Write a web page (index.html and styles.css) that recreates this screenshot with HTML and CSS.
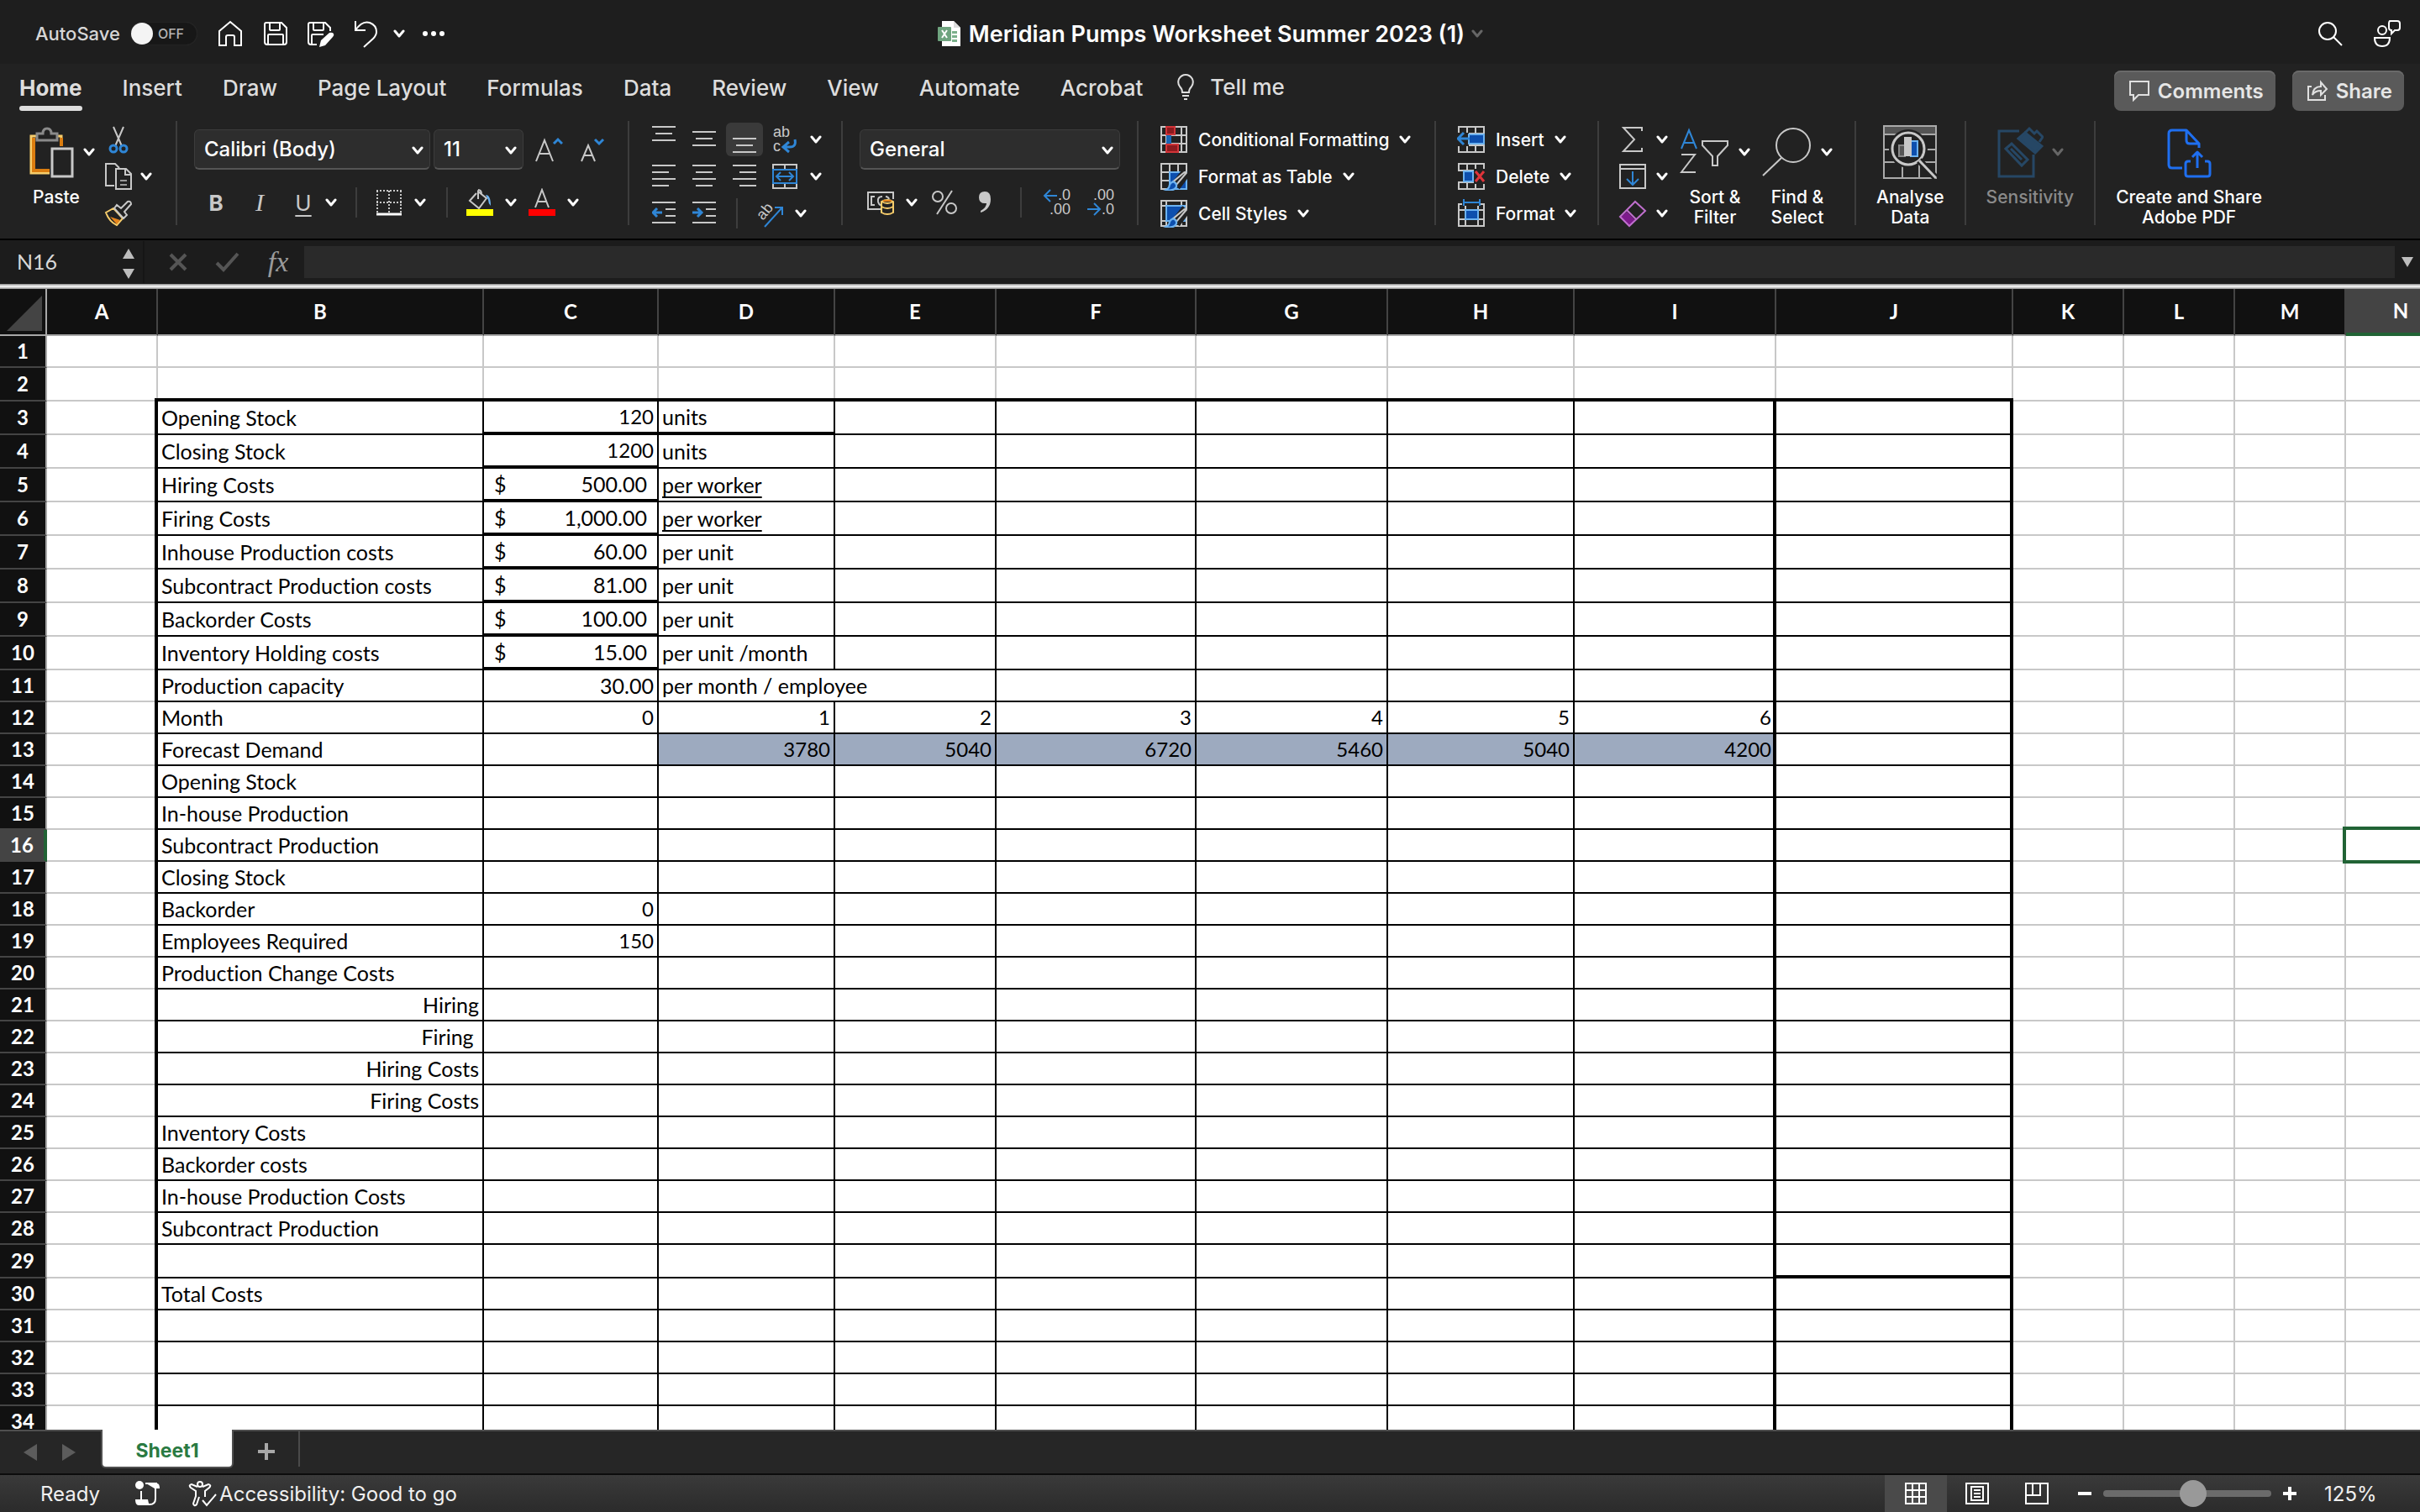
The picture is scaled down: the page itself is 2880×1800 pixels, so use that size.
FILE: index.html
```html
<!DOCTYPE html>
<html lang="en">

<head>
    <meta charset="utf-8">
    <meta name="viewport" content="width=device-width, initial-scale=1.0">
    <title>Meridian Pumps Worksheet Summer 2023 (1)</title>
    <link rel="stylesheet" href="styles.css">
</head>

<body>
    <svg class="symbols" aria-hidden="true">
        <symbol id="chev" viewBox="0 0 14 10">
            <path d="M2 2l5 6 5-6" fill="none" stroke="currentColor" stroke-width="3" stroke-linecap="round" stroke-linejoin="round" />
        </symbol>
        <symbol id="brush" viewBox="0 0 32 32">
            <path d="M30 11L18 27" stroke="#222" stroke-width="11" />
            <path d="M30 12L19 25l-4-3L27 12q3-2 3 0z" fill="#222" stroke="#c8c8c8" stroke-width="2" />
            <path d="M15 22q4 1 4 5-2 6-12 4 4-2 4-5 1-3 4-4z" fill="#0d4fae" stroke="#6cb2f0" stroke-width="2" />
        </symbol>
    </svg>

    <header class="titlebar">
        <div class="quick-access">
            <label class="autosave" for="autosave">AutoSave</label>
            <span class="toggle">
                <input type="checkbox" id="autosave">
                <span class="knob"></span>
                <span class="toggle-text">OFF</span>
            </span>
            <button class="quick-btn" aria-label="Home"><svg width="30" height="32" viewBox="0 0 30 32"><path d="M2 30V13L15 2l13 11v17h-8V20q0-2-2-2h-6q-2 0-2 2v10z" /></svg></button>
            <button class="quick-btn" aria-label="Save"><svg width="30" height="32" viewBox="0 0 30 32"><path d="M4 3h18l6 6v17q0 3-3 3H5q-3 0-3-3V5q0-2 2-2zM8 3v8q0 1 1 1h10q1 0 1-1V3M6 29V18q0-1 1-1h16q1 0 1 1v11" /></svg></button>
            <button class="quick-btn" aria-label="Save as"><svg width="34" height="34" viewBox="0 0 34 34"><path d="M12 30H5q-3 0-3-3V6q0-2 2-2h18l6 6v4M8 4v8q0 1 1 1h10q1 0 1-1V4M6 30V19q0-1 1-1h13" /><path d="M15 33l2-8 10-9q3-1 5 1 1 2-1 4l-9 10z" fill="#fff" stroke="none" /></svg></button>
            <button class="quick-btn" aria-label="Undo"><svg width="30" height="34" viewBox="0 0 30 34"><path d="M2 2v11h12M2 13Q10 1 19 4q8 3 8 11 0 4-4 8L12 33" /></svg></button>
            <button class="quick-btn slim" aria-label="Undo history"><svg class="chev"><use href="#chev" /></svg></button>
            <button class="quick-btn" aria-label="More"><svg width="28" height="8" viewBox="0 0 28 8"><g fill="#fff" stroke="none"><circle cx="4" cy="4" r="3" /><circle cx="14" cy="4" r="3" /><circle cx="24" cy="4" r="3" /></g></svg></button>
        </div>
        <div class="doc-title">
            <svg width="30" height="32" viewBox="0 0 30 32">
                <path d="M6 1h14l8 8v22H6z" fill="#fff" />
                <path d="M20 1v8h8" fill="#ddd" />
                <path d="M18 13h6v3h-6zM18 18h6v3h-6zM18 23h6v3h-6z" fill="#7bb08b" />
                <rect x="1" y="8" width="16" height="17" rx="1" fill="#6fa47f" />
                <path d="M6 12l6 9M12 12l-6 9" stroke="#fff" stroke-width="2" />
            </svg>
            <h1>Meridian Pumps Worksheet Summer 2023 (1)</h1>
            <svg class="chev dim"><use href="#chev" /></svg>
        </div>
        <div class="title-actions">
            <button class="quick-btn" aria-label="Search"><svg width="30" height="30" viewBox="0 0 30 30"><circle cx="12" cy="12" r="10" /><path d="M19 19l10 10" /></svg></button>
            <button class="quick-btn" aria-label="Presence"><svg width="34" height="34" viewBox="0 0 34 34"><circle cx="11" cy="13" r="5" /><path d="M2 22h18q0 10-9 10T2 22zM20 2h9q3 0 3 3v5q0 3-3 3h-3l-4 4v-4q-3 0-3-3V5q0-2 1-3z" /></svg></button>
        </div>
    </header>

    <nav class="tabs">
        <a href="#" class="tab active">Home</a>
        <a href="#" class="tab">Insert</a>
        <a href="#" class="tab">Draw</a>
        <a href="#" class="tab">Page Layout</a>
        <a href="#" class="tab">Formulas</a>
        <a href="#" class="tab">Data</a>
        <a href="#" class="tab">Review</a>
        <a href="#" class="tab">View</a>
        <a href="#" class="tab">Automate</a>
        <a href="#" class="tab">Acrobat</a>
        <a href="#" class="tab tell-me"><svg width="22" height="32" viewBox="0 0 22 32"><path d="M7 22q0-4-3-7-3-4-1-9 3-5 8-5t8 5q2 5-1 9-3 3-3 7zM7 26h8M9 30h4" fill="none" stroke="#ddd" stroke-width="2" /></svg>Tell me</a>
        <div class="tab-actions">
            <button class="pill"><svg width="26" height="26" viewBox="0 0 26 26"><path d="M2 2h22v16H12l-6 6v-6H2z" /></svg>Comments</button>
            <button class="pill"><svg width="26" height="26" viewBox="0 0 26 26"><path d="M6 8H2v16h20v-6M7 18q1-10 10-10V3l7 8-7 7v-5q-7 0-10 5z" /></svg>Share</button>
        </div>
    </nav>

    <section class="ribbon">
        <div class="group clipboard">
            <div class="big-col">
                <button class="big-btn">
                    <span class="big-icon">
                        <svg width="56" height="62" viewBox="0 0 56 62">
                            <path d="M4 12h36v44H4z" fill="#222" stroke="#f7cd6b" stroke-width="3" />
                            <path d="M7 14v39h33V14" fill="none" stroke="#db7d10" stroke-width="4" />
                            <path d="M11 17V9h7q0-6 5-6t5 6h7v8z" fill="#222" stroke="#8a8a8a" stroke-width="3" />
                            <path d="M26 24h30v38H26z" fill="#222" />
                            <path d="M29 27h24v33H29z" fill="#222" stroke="#c8c8c8" stroke-width="3" />
                        </svg>
                        <svg class="chev"><use href="#chev" /></svg>
                    </span>
                    <span>Paste</span>
                </button>
            </div>
            <div class="rows">
                <button class="icon-btn" aria-label="Cut"><svg width="32" height="34" viewBox="0 0 32 34"><path d="M10 2l10 23M22 2L12 25" stroke="#c8c8c8" stroke-width="2" fill="none" /><circle cx="10" cy="28" r="4" fill="none" stroke="#2f86d6" stroke-width="3" /><circle cx="22" cy="28" r="4" fill="none" stroke="#2f86d6" stroke-width="3" /></svg></button>
                <div class="row">
                    <button class="icon-btn" aria-label="Copy"><svg width="34" height="34" viewBox="0 0 34 34"><path d="M12 28H2V2h11l5 5M14 8h12l6 6v18H14zM25 8v7h7" fill="none" stroke="#c8c8c8" stroke-width="2" /><path d="M19 22h8M19 27h8" stroke="#9a9a9a" stroke-width="2" /></svg></button>
                    <svg class="chev"><use href="#chev" /></svg>
                </div>
                <button class="icon-btn" aria-label="Format painter"><svg width="34" height="32" viewBox="0 0 34 32"><path d="M2 15l9-5 11 12-7 8Q6 26 2 15z" fill="#222" stroke="#f7cd6b" stroke-width="2" /><path d="M7 20l12 4-4 5z" fill="#e8861c" /><path d="M12 10l3-4 5 4 8-8q4-1 4 3l-8 9 3 4-4 4z" fill="#222" stroke="#c8c8c8" stroke-width="2" /></svg></button>
            </div>
        </div>
        <div class="sep"></div>

        <div class="group font-group">
            <div class="row fields">
                <div class="field font-name">
                    <select aria-label="Font"><option>Calibri (Body)</option></select>
                    <svg class="chev"><use href="#chev" /></svg>
                </div>
                <div class="field font-size">
                    <select aria-label="Font size"><option>11</option></select>
                    <svg class="chev"><use href="#chev" /></svg>
                </div>
                <button class="icon-btn grow" aria-label="Increase font size"><svg width="34" height="32" viewBox="0 0 34 32"><path d="M2 30L12 5l10 25M6 21h12" fill="none" stroke="#c8c8c8" stroke-width="2" /><path d="M23 9l5-5 5 5" fill="none" stroke="#2f86d6" stroke-width="3" /></svg></button>
                <button class="icon-btn" aria-label="Decrease font size"><svg width="34" height="32" viewBox="0 0 34 32"><path d="M4 30l8-19 8 19M7 23h10" fill="none" stroke="#c8c8c8" stroke-width="2" /><path d="M20 4l5 5 5-5" fill="none" stroke="#2f86d6" stroke-width="3" /></svg></button>
            </div>
            <div class="row">
                <button class="text-btn bold">B</button>
                <button class="text-btn italic">I</button>
                <button class="text-btn underline">U</button>
                <svg class="chev"><use href="#chev" /></svg>
                <div class="mini-sep"></div>
                <button class="icon-btn" aria-label="Borders"><svg width="32" height="32" viewBox="0 0 32 32"><path d="M1 2h30M1 16h30M2 2v26M16 2v26M30 2v26" fill="none" stroke="#c8c8c8" stroke-width="2" stroke-dasharray="2 2" /><path d="M1 30h30" stroke="#fff" stroke-width="3" /></svg></button>
                <svg class="chev"><use href="#chev" /></svg>
                <div class="mini-sep"></div>
                <button class="icon-btn" aria-label="Fill colour"><svg width="34" height="34" viewBox="0 0 34 34"><path d="M13 6L5 15l11 9 9-12L15 4v9M15 2q4 0 4 5" fill="none" stroke="#c8c8c8" stroke-width="2" /><path d="M24 8q6 0 6 13-3-3-3-7z" fill="#6cb2f0" /><path d="M1 25h32v8H1z" fill="#ff0" /></svg></button>
                <svg class="chev"><use href="#chev" /></svg>
                <button class="icon-btn" aria-label="Font colour"><svg width="34" height="34" viewBox="0 0 34 34"><path d="M9 23l8-21 8 21M12 16h10" fill="none" stroke="#c8c8c8" stroke-width="2" /><path d="M1 25h32v8H1z" fill="#f00" /></svg></button>
                <svg class="chev"><use href="#chev" /></svg>
            </div>
        </div>
        <div class="sep"></div>

        <div class="group align-group">
            <div class="row">
                <button class="icon-btn" aria-label="Top align"><svg class="lines" viewBox="0 0 28 32"><path d="M0 1h28M4 9h20M0 17h28" /></svg></button>
                <button class="icon-btn" aria-label="Middle align"><svg class="lines" viewBox="0 0 28 32"><path d="M0 7h28M4 15h20M0 23h28" /></svg></button>
                <button class="icon-btn active" aria-label="Bottom align"><svg class="lines" viewBox="0 0 28 32"><path d="M0 15h28M4 23h20M0 31h28" /></svg></button>
                <button class="icon-btn" aria-label="Wrap text"><svg class="glyphs" width="30" height="34" viewBox="0 0 30 34"><text x="1" y="14">ab</text><text x="1" y="31">c</text><path d="M27 17q2 9-6 9h-7M20 20l-7 6 7 6" fill="none" stroke="#2f86d6" stroke-width="3" /></svg></button>
                <svg class="chev"><use href="#chev" /></svg>
            </div>
            <div class="row">
                <button class="icon-btn" aria-label="Align left"><svg class="lines" viewBox="0 0 28 32"><path d="M0 3h28M0 11h20M0 19h28M0 27h20" /></svg></button>
                <button class="icon-btn" aria-label="Centre"><svg class="lines" viewBox="0 0 28 32"><path d="M0 3h28M4 11h20M0 19h28M4 27h20" /></svg></button>
                <button class="icon-btn" aria-label="Align right"><svg class="lines" viewBox="0 0 28 32"><path d="M0 3h28M8 11h20M0 19h28M8 27h20" /></svg></button>
                <button class="icon-btn" aria-label="Merge"><svg width="32" height="32" viewBox="0 0 32 32"><path d="M2 2h28v28H2zM16 2v6M16 24v6" fill="none" stroke="#c8c8c8" stroke-width="2" /><path d="M2 8h28v16H2z" fill="#222" stroke="#2f86d6" stroke-width="2" /><path d="M6 16h20M11 11l-5 5 5 5M21 11l5 5-5 5" fill="none" stroke="#2f86d6" stroke-width="2" /></svg></button>
                <svg class="chev"><use href="#chev" /></svg>
            </div>
            <div class="row">
                <button class="icon-btn" aria-label="Decrease indent"><svg class="lines" viewBox="0 0 28 32"><path d="M0 3h28M16 11h12M16 19h12M0 27h28" /><path class="blue" d="M1 15h11M6 10l-5 5 5 5" /></svg></button>
                <button class="icon-btn" aria-label="Increase indent"><svg class="lines" viewBox="0 0 28 32"><path d="M0 3h28M16 11h12M16 19h12M0 27h28" /><path class="blue" d="M0 15h11M6 10l5 5-5 5" /></svg></button>
                <div class="mini-sep tight"></div>
                <button class="icon-btn" aria-label="Orientation"><svg class="glyphs" width="34" height="34" viewBox="0 0 34 34"><text x="0" y="0" transform="translate(9 26) rotate(-50)">ab</text><path d="M11 33L31 11M23 10h9v9" fill="none" stroke="#2f86d6" stroke-width="2" /></svg></button>
                <svg class="chev"><use href="#chev" /></svg>
            </div>
        </div>
        <div class="sep"></div>

        <div class="group font-group">
            <div class="row fields">
                <div class="field number-format">
                    <select aria-label="Number format"><option>General</option></select>
                    <svg class="chev"><use href="#chev" /></svg>
                </div>
            </div>
            <div class="row number-row">
                <button class="icon-btn" aria-label="Currency"><svg width="34" height="32" viewBox="0 0 34 32"><path d="M17 24H2V4h30v8" fill="none" stroke="#c8c8c8" stroke-width="2" /><path d="M10 9H6v10h4M19 9q-6 0-5 6 1 4 3 4M23 9q3 0 4 3" fill="none" stroke="#c8c8c8" stroke-width="2" /><path d="M18 15q7-4 14 0v13q-7 4-14 0z" fill="#222" stroke="#f7cd6b" stroke-width="2" /><path d="M18 15q7 4 14 0M18 21q7 4 14 0" fill="none" stroke="#f7cd6b" stroke-width="2" /><path d="M20 14h10" stroke="#e8861c" stroke-width="2" /></svg></button>
                <svg class="chev"><use href="#chev" /></svg>
                <button class="icon-btn" aria-label="Percent"><svg width="32" height="32" viewBox="0 0 32 32"><g fill="none" stroke="#c8c8c8" stroke-width="2"><circle cx="8" cy="9" r="6" /><circle cx="24" cy="23" r="6" /><path d="M25 2L7 30" /></g></svg></button>
                <button class="icon-btn" aria-label="Comma"><svg width="18" height="30" viewBox="0 0 18 30"><path d="M9 2q7 0 7 9 0 12-12 16v-2q7-4 7-9-9 1-9-7 0-7 7-7z" fill="#c8c8c8" /></svg></button>
                <div class="mini-sep"></div>
                <button class="icon-btn" aria-label="Increase decimal"><svg class="glyphs" width="34" height="34" viewBox="0 0 34 34"><text x="33" y="14" text-anchor="end">.0</text><text x="33" y="31" text-anchor="end">.00</text><path d="M2 9h15M9 2L2 9l7 7" fill="none" stroke="#2f86d6" stroke-width="2" /></svg></button>
                <button class="icon-btn" aria-label="Decrease decimal"><svg class="glyphs" width="34" height="34" viewBox="0 0 34 34"><text x="33" y="14" text-anchor="end">.00</text><text x="33" y="31" text-anchor="end">.0</text><path d="M1 25h15M9 18l7 7-7 7" fill="none" stroke="#2f86d6" stroke-width="2" /></svg></button>
            </div>
        </div>
        <div class="sep"></div>

        <div class="group rows styles-group">
            <button class="line-btn"><svg width="34" height="34" viewBox="0 0 34 34"><path d="M2 2h30v30H2zM2 12h30M2 22h30M8 2v30M26 2v30" fill="none" stroke="#c8c8c8" stroke-width="2" /><path d="M8 2h10v9H8zM8 23h14v9H8z" fill="#8c1a1f" stroke="#d13438" stroke-width="2" /><path d="M8 12h6v10H8z" fill="#1a66b5" /></svg>Conditional Formatting<svg class="chev"><use href="#chev" /></svg></button>
            <button class="line-btn"><svg width="34" height="34" viewBox="0 0 34 34"><path d="M2 2h30v30H2zM2 12h30M2 22h30M12 2v30M22 2v30" fill="none" stroke="#c8c8c8" stroke-width="2" /><path d="M12 12h20v20H12z" fill="#0d4fae" stroke="#6cb2f0" stroke-width="2" /><use href="#brush" width="34" height="34" /></svg>Format as Table<svg class="chev"><use href="#chev" /></svg></button>
            <button class="line-btn"><svg width="34" height="34" viewBox="0 0 34 34"><path d="M2 2h30v30H2zM2 8h30M2 26h30M8 2v30M26 2v30" fill="none" stroke="#c8c8c8" stroke-width="2" /><path d="M8 8h22v18H8z" fill="#0d4fae" stroke="#6cb2f0" stroke-width="2" /><use href="#brush" width="34" height="34" /></svg>Cell Styles<svg class="chev"><use href="#chev" /></svg></button>
        </div>
        <div class="sep"></div>

        <div class="group rows cells-group">
            <button class="line-btn"><svg width="34" height="34" viewBox="0 0 34 34"><path d="M2 2h30v30H2zM2 10h30M2 24h30M12 2v30M22 2v30" fill="none" stroke="#c8c8c8" stroke-width="2" /><path d="M0 9h14v16H0z" fill="#222" /><path d="M14 11h18v11H14z" fill="#0d4fae" stroke="#6cb2f0" stroke-width="2" /><path d="M1 16h14M8 9l-7 7 7 7" fill="none" stroke="#2f86d6" stroke-width="3" /></svg>Insert<svg class="chev"><use href="#chev" /></svg></button>
            <button class="line-btn"><svg width="34" height="34" viewBox="0 0 34 34"><path d="M2 10V2h30v8zM2 24v8h30v-8zM12 2v30M22 2v30" fill="none" stroke="#c8c8c8" stroke-width="2" /><path d="M8 11h11v12H8z" fill="#0d4fae" stroke="#6cb2f0" stroke-width="2" /><path d="M20 8h14v18H20z" fill="#222" /><path d="M22 11l10 12M32 11L22 23" stroke="#e0343a" stroke-width="3" /></svg>Delete<svg class="chev"><use href="#chev" /></svg></button>
            <button class="line-btn"><svg width="34" height="34" viewBox="0 0 34 34"><path d="M6 6H2v26h30V6h-4M2 13h30M2 24h30M10 8v24M25 8v24" fill="none" stroke="#c8c8c8" stroke-width="2" /><path d="M10 13h15v11H10z" fill="#0d4fae" stroke="#6cb2f0" stroke-width="2" /><path d="M8 0v8M27 0v8M8 4h19" fill="none" stroke="#2f86d6" stroke-width="2" /></svg>Format<svg class="chev"><use href="#chev" /></svg></button>
        </div>
        <div class="sep"></div>

        <div class="group editing-group">
            <div class="rows">
                <button class="line-btn" aria-label="AutoSum"><svg width="34" height="34" viewBox="0 0 34 34"><path d="M28 7V3H6l13 14L6 31h22v-4" fill="none" stroke="#c8c8c8" stroke-width="2" /></svg><svg class="chev"><use href="#chev" /></svg></button>
                <button class="line-btn" aria-label="Fill"><svg width="34" height="34" viewBox="0 0 34 34"><path d="M2 3h30v28H2zM2 8h30" fill="none" stroke="#c8c8c8" stroke-width="2" /><path d="M17 11v16M10 20l7 7 7-7" fill="none" stroke="#2f86d6" stroke-width="2" /></svg><svg class="chev"><use href="#chev" /></svg></button>
                <button class="line-btn" aria-label="Clear"><svg width="34" height="34" viewBox="0 0 34 34"><path d="M10 15l10 10-7 7L2 22z" fill="#7d1a8c" /><path d="M20 3l12 11-19 18L2 21zM10 13l11 11" fill="none" stroke="#c06fce" stroke-width="2" /></svg><svg class="chev"><use href="#chev" /></svg></button>
            </div>
            <button class="big-btn">
                <span class="big-icon">
                    <svg width="60" height="62" viewBox="0 0 60 62"><path d="M2 27l9-22 9 22M5 20h12" fill="none" stroke="#2f86d6" stroke-width="2" /><path d="M2 34h16L2 55h17" fill="none" stroke="#c8c8c8" stroke-width="2" /><path d="M27 18h30v5L45 36v11h-6V36L27 23z" fill="none" stroke="#c8c8c8" stroke-width="2" /></svg>
                    <svg class="chev"><use href="#chev" /></svg>
                </span>
                <span>Sort &amp;<br>Filter</span>
            </button>
            <button class="big-btn">
                <span class="big-icon">
                    <svg width="60" height="62" viewBox="0 0 60 62"><g fill="none" stroke="#c8c8c8" stroke-width="2"><circle cx="37" cy="23" r="20" /><path d="M23 38L1 59" /></g></svg>
                    <svg class="chev"><use href="#chev" /></svg>
                </span>
                <span>Find &amp;<br>Select</span>
            </button>
        </div>
        <div class="sep"></div>

        <div class="group single">
            <button class="big-btn">
                <span class="big-icon">
                    <svg width="66" height="66" viewBox="0 0 66 66"><path d="M2 3h62v9H2z" fill="#555" /><path d="M2 2h62v62H2zM2 12h62M2 30h62M2 45h62M24 45v18M44 45v18" fill="none" stroke="#aaa" stroke-width="2" /><circle cx="31" cy="29" r="23" fill="#222" /><circle cx="31" cy="29" r="19" fill="#222" stroke="#c8c8c8" stroke-width="3" /><path d="M44 43l20 21" stroke="#222" stroke-width="8" /><path d="M44 43l20 21" stroke="#c8c8c8" stroke-width="3" /><path d="M20 25h7v13h-7z" fill="#555" stroke="#888" stroke-width="2" /><path d="M34 20h8v18h-8z" fill="#0d4fae" stroke="#6cb2f0" stroke-width="2" /><path d="M26 15h9v23h-9z" fill="#c8c8c8" /></svg>
                </span>
                <span>Analyse<br>Data</span>
            </button>
        </div>
        <div class="sep"></div>

        <div class="group single">
            <button class="big-btn" disabled>
                <span class="big-icon">
                    <svg width="56" height="62" viewBox="0 0 56 62"><g fill="none" stroke="#264765" stroke-width="3"><path d="M27 6H3v54h41V34" /><path d="M11 27l7-6 19 19-7 7zM17 27l13 13" /><path d="M26 15l8-7 20 16-8 8z" fill="#264765" /><path d="M34 8l5-5 6 6 3-3 7 7-4 6" /></g></svg>
                    <svg class="chev"><use href="#chev" /></svg>
                </span>
                <span>Sensitivity</span>
            </button>
        </div>
        <div class="sep"></div>

        <div class="group single adobe">
            <button class="big-btn">
                <span class="big-icon">
                    <svg width="54" height="62" viewBox="0 0 54 62"><path d="M19 50H7q-4 0-4-4V9q0-4 4-4h17l15 16v5M24 5v12q0 4 4 4h11M29 42h-3q-3 0-3 3v12q0 3 3 3h23q3 0 3-3V45q0-3-3-3h-3M37 50V31M31 37l6-6 6 6" fill="none" stroke="#1f6ff0" stroke-width="3" stroke-linejoin="round" /></svg>
                </span>
                <span>Create and Share<br>Adobe PDF</span>
            </button>
        </div>
    </section>

    <section class="formula-bar">
        <input class="name-box" type="text" value="N16" aria-label="Name box">
        <div class="stepper">
            <svg width="14" height="38" viewBox="0 0 14 38"><path d="M7 1l7 12H0zM7 37L0 25h14z" fill="#bdbdbd" /></svg>
        </div>
        <button class="formula-btn" aria-label="Cancel"><svg width="24" height="24" viewBox="0 0 24 24"><path d="M3 3l18 18M21 3L3 21" stroke="#555" stroke-width="4" /></svg></button>
        <button class="formula-btn" aria-label="Enter"><svg width="30" height="24" viewBox="0 0 30 24"><path d="M2 13l8 8L27 2" fill="none" stroke="#555" stroke-width="4" /></svg></button>
        <button class="formula-btn fx">fx</button>
        <input class="formula-input" type="text" aria-label="Formula">
        <button class="expand" aria-label="Expand formula bar"><svg width="14" height="12" viewBox="0 0 14 12"><path d="M0 0h14L7 12z" fill="#bdbdbd" /></svg></button>
    </section>

    <main class="sheet">
        <table class="grid">
            <colgroup id="cols"></colgroup>
            <thead>
                <tr id="headRow"></tr>
            </thead>
            <tbody id="rows"></tbody>
        </table>
    </main>

    <footer>
        <div class="sheet-tabs">
            <button class="arrow" aria-label="Previous sheet"><svg width="16" height="20" viewBox="0 0 16 20"><path d="M16 0v20L0 10z" fill="#5c5c5c" /></svg></button>
            <button class="arrow" aria-label="Next sheet"><svg width="16" height="20" viewBox="0 0 16 20"><path d="M0 0v20l16-10z" fill="#5c5c5c" /></svg></button>
            <a href="#" class="sheet-tab">Sheet1</a>
            <button class="add-sheet" aria-label="Add sheet"><svg width="20" height="20" viewBox="0 0 20 20"><path d="M10 0v20M0 10h20" stroke="#a8a8a8" stroke-width="4" /></svg></button>
        </div>
        <div class="status">
            <span class="ready">Ready</span>
            <svg class="macro" width="30" height="30" viewBox="0 0 30 30"><circle cx="5" cy="5" r="5" fill="#fff" /><path d="M13 3h13q3 0 3 6h-6" fill="#fff" /><path d="M12 3h14M7 12v11M24 4v17q0 7-7 7" fill="none" stroke="#fff" stroke-width="2" /><path d="M0 22h15q0 4 3 7H4q-4 0-4-7z" fill="#fff" /></svg>
            <svg class="access" width="34" height="32" viewBox="0 0 34 32"><g fill="none" stroke="#fff" stroke-width="2"><circle cx="14" cy="5" r="3" /><path d="M11 8L4 5Q0 6 3 9l6 4v6L6 28q1 4 4 1l3-9M17 8l7-3q4 1 1 4l-5 4v7M17 24l5 6L33 17" /></g></svg>
            <span>Accessibility: Good to go</span>
            <div class="view-controls">
                <button class="view active" aria-label="Normal view"><svg width="28" height="28" viewBox="0 0 28 28"><path d="M2 2h24v24H2zM2 10h24M2 18h24M10 2v24M18 2v24" /></svg></button>
                <button class="view" aria-label="Page layout view"><svg width="28" height="28" viewBox="0 0 28 28"><path d="M1 2h26v24H1zM7 6h14v16H7zM10 10h8M10 14h8M10 18h8" /></svg></button>
                <button class="view" aria-label="Page break view"><svg width="28" height="28" viewBox="0 0 28 28"><path d="M1 2h26v24H1zM1 16h17V2M9 2v14" /></svg></button>
                <button class="zoom-btn" aria-label="Zoom out"><svg width="16" height="16" viewBox="0 0 16 16"><path d="M0 8h16" stroke="#fff" stroke-width="4" /></svg></button>
                <input class="zoom" type="range" min="0" max="100" value="54" aria-label="Zoom">
                <button class="zoom-btn" aria-label="Zoom in"><svg width="16" height="16" viewBox="0 0 16 16"><path d="M8 0v16M0 8h16" stroke="#fff" stroke-width="4" /></svg></button>
                <span class="zoom-value">125%</span>
            </div>
        </div>
    </footer>

    <script src="sheet.js"></script>
</body>

</html>
```
FILE: styles.css
```css
:root {
    --bar: #1e1e1e;
    --ribbon: #222;
    --icon: #c8c8c8;
    --blue: #2f86d6;
    --line: #c8c8c8;
    --green: #216335;
    --ui: Inter, "Liberation Sans", sans-serif;
    --cell: Lato, "Liberation Sans", sans-serif;
}

* {
    box-sizing: border-box;
}

body {
    display: flex;
    flex-direction: column;
    height: 100vh;
    margin: 0;
    overflow: hidden;
    background: var(--ribbon);
    color: #fff;
    font-family: var(--ui);
    font-size: 22px;
    font-weight: 500;
}

button {
    display: flex;
    align-items: center;
    justify-content: center;
    padding: 0;
    border: none;
    background: none;
    color: inherit;
    font: inherit;
}

svg {
    flex: none;
    display: block;
}

a {
    color: inherit;
    text-decoration: none;
}

.symbols {
    position: absolute;
    width: 0;
    height: 0;
}

.chev {
    width: 14px;
    height: 10px;
}

.row {
    display: flex;
    align-items: center;
}

/* title bar */
.titlebar {
    display: grid;
    grid-template-columns: 1fr auto 1fr;
    align-items: center;
    height: 76px;
    padding: 4px 42px 0;
    background: var(--bar);
}

.quick-access {
    display: flex;
    align-items: center;
}

.autosave {
    margin-right: 12px;
    color: #d6d6d6;
}

.toggle {
    position: relative;
    display: flex;
    align-items: center;
    width: 80px;
    height: 28px;
    margin-right: 12px;
    border-radius: 14px;
    background: #171717;
    box-shadow: inset 0 0 2px #444;
}

.toggle input {
    position: absolute;
    inset: 0;
    margin: 0;
    opacity: 0;
}

.knob {
    width: 26px;
    height: 26px;
    margin: 0 6px 0 1px;
    border-radius: 50%;
    background: #f4f4f4;
}

.toggle-text {
    color: #b4b4b4;
    font-size: 16px;
}

.quick-btn {
    width: 54px;
    height: 44px;
}

.quick-btn.slim {
    width: 24px;
    margin-right: 2px;
}

.quick-btn svg:not(.chev) {
    fill: none;
    stroke: #fff;
    stroke-width: 2;
}

.doc-title {
    display: flex;
    align-items: center;
    gap: 8px;
}

.doc-title h1 {
    margin: 0;
    font-size: 27px;
    font-weight: 600;
}

.chev.dim {
    color: #666;
}

.title-actions {
    display: flex;
    justify-content: flex-end;
    gap: 14px;
    margin-right: -30px;
}

/* ribbon tabs */
.tabs {
    display: flex;
    align-items: flex-start;
    gap: 48px;
    height: 62px;
    padding: 0 19px 0 23px;
    color: #ddd;
    font-size: 26px;
}

.tab {
    position: relative;
    height: 56px;
    line-height: 58px;
}

.tab.active {
    font-weight: 700;
}

.tab.active::after {
    content: "";
    position: absolute;
    left: 0;
    right: 0;
    bottom: 0;
    height: 6px;
    border-radius: 3px;
    background: #ddd;
}

.tell-me {
    display: flex;
    align-items: center;
    gap: 18px;
    margin-left: -8px;
}

.tab-actions {
    display: flex;
    gap: 20px;
    margin: 8px 0 0 auto;
}

.pill {
    gap: 9px;
    height: 48px;
    padding: 0 14px 0 17px;
    border-radius: 8px;
    background: #5a5a5a;
    box-shadow: inset 0 2px #6a6a6a;
    color: #e6e6e6;
    font-size: 24px;
    font-weight: 600;
}

.pill svg {
    fill: none;
    stroke: #e0e0e0;
    stroke-width: 2;
}

/* ribbon */
.ribbon {
    display: flex;
    align-items: flex-start;
    padding: 6px 0 8px;
    border-bottom: 2px solid #000;
}

.sep {
    width: 2px;
    height: 124px;
    background: #3d3d3d;
}

.mini-sep {
    width: 2px;
    height: 36px;
    margin: 0 16px;
    background: #3d3d3d;
}

.group {
    display: flex;
    height: 132px;
}

.rows {
    display: flex;
    flex-direction: column;
}

.icon-btn {
    width: 44px;
    height: 44px;
}

.icon-btn.active {
    height: 40px;
    border-radius: 6px;
    background: #3a3a3a;
}

.icon-btn + .chev {
    margin: 0 8px;
}

.text-btn + .chev {
    margin-right: 6px;
}

.big-btn {
    flex-direction: column;
    justify-content: flex-start;
    line-height: 24px;
    font-size: 21px;
}

.big-btn:disabled {
    color: #8a8a8a;
}

.big-icon {
    display: flex;
    align-items: center;
    gap: 10px;
    height: 74px;
    margin-bottom: 5px;
}

.big-btn:disabled .chev {
    color: #666;
}

.clipboard {
    width: 209px;
    padding-left: 33px;
}

.clipboard .big-btn {
    align-items: flex-start;
}

.clipboard .big-btn > span:last-child {
    margin-left: 6px;
}

.clipboard .rows {
    margin-left: 6px;
}

.clipboard .icon-btn + .chev {
    margin: 0 4px;
}

.font-group {
    flex-direction: column;
    gap: 17px;
    padding: 10px 20px 0;
}

.font-group .row:last-child {
    height: 44px;
}

.fields {
    gap: 4px;
}

.field {
    position: relative;
}

.field .chev {
    position: absolute;
    right: 8px;
    top: 20px;
    pointer-events: none;
}

.field select {
    appearance: none;
    width: 100%;
    height: 48px;
    padding: 0 11px;
    border: 1px solid #3c3c3c;
    border-bottom: 2px solid #555;
    border-radius: 6px;
    background: #2d2d2d;
    color: #fff;
    font: inherit;
    font-size: 24px;
}

.font-name {
    width: 281px;
}

.font-size {
    width: 107px;
}

.number-format {
    width: 310px;
}

.icon-btn.grow {
    margin: 0 4px;
}

.text-btn {
    width: 52px;
    height: 44px;
    color: var(--icon);
    font-size: 26px;
}

.text-btn.bold {
    font-weight: 700;
}

.text-btn.italic {
    font-family: "Liberation Serif", serif;
    font-size: 30px;
    font-style: italic;
}

.text-btn.underline {
    font-weight: 400;
    text-decoration: underline;
    text-underline-offset: 5px;
}

.align-group {
    flex-direction: column;
    padding: 0 19px;
}

.align-group .row {
    gap: 4px;
    height: 44px;
}

.align-group .icon-btn + .chev {
    margin: 0 4px;
}

.lines {
    width: 28px;
    height: 32px;
    fill: none;
    stroke: var(--icon);
    stroke-width: 2;
}

.lines .blue {
    stroke: var(--blue);
    stroke-width: 3;
}

.glyphs {
    overflow: visible;
}

.glyphs text {
    fill: var(--icon);
    font-family: "Liberation Sans", sans-serif;
    font-size: 18px;
    font-weight: 400;
}

.mini-sep.tight {
    margin: 0 12px;
}

.number-row {
    gap: 4px;
    margin-left: 3px;
}

.number-row .icon-btn + .chev {
    margin: 0 6px 0 4px;
}

.number-row .icon-btn:last-child {
    margin-left: 4px;
}

.line-btn {
    justify-content: flex-start;
    gap: 12px;
    height: 44px;
    font-size: 21px;
}

.styles-group {
    width: 352px;
    padding-left: 25px;
}

.cells-group {
    width: 192px;
    padding-left: 25px;
}

.editing-group {
    gap: 14px;
    padding: 0 26px 0 23px;
}

.editing-group .line-btn {
    gap: 11px;
}

.single {
    padding: 0 24px;
}

/* formula bar */
.formula-bar {
    display: flex;
    align-items: center;
    height: 52px;
    background: #1c1c1c;
}

.formula-bar input {
    border: none;
    background: none;
    color: #d8d8d8;
    font-family: var(--cell);
    font-size: 25px;
    outline: none;
}

.name-box {
    width: 146px;
    padding: 0 0 3px 20px;
}

.stepper {
    width: 26px;
    height: 50px;
    padding-top: 8px;
    border-right: 2px solid #161616;
}

.formula-btn {
    width: 59px;
    margin-left: 10px;
}

.formula-btn + .formula-btn {
    margin-left: 0;
}

.formula-btn.fx {
    width: 62px;
    color: #9a9a9a;
    font-family: "Liberation Serif", serif;
    font-size: 34px;
    font-style: italic;
}

.formula-bar .formula-input {
    flex: 1;
    height: 38px;
    background: #2a2a2a;
}

.expand {
    width: 30px;
}

/* worksheet */
.sheet {
    flex: 1;
    min-height: 0;
    overflow: hidden;
    padding-top: 6px;
    background: linear-gradient(#8a8a8a, #fff 50%, #8a8a8a) top / 100% 6px no-repeat #fff;
}

.grid {
    width: 2924px;
    table-layout: fixed;
    border-collapse: separate;
    border-spacing: 0;
    font-family: var(--cell);
    font-size: 25px;
    font-weight: 400;
    font-variant-ligatures: none;
    line-height: 30px;
}

.grid th,
.grid td {
    height: 38px;
    padding: 0 4px;
    border-right: 2px solid var(--line);
    border-bottom: 2px solid var(--line);
    white-space: nowrap;
}

.grid th {
    padding: 0;
    border-color: #444;
    background: #111;
    color: #fff;
    font-size: 24px;
    font-weight: 700;
}

.grid thead th {
    height: 56px;
    border-bottom-color: #a8a8a8;
}

.grid tbody th {
    border-right-color: #a8a8a8;
}

.grid tr.tall > * {
    height: 40px;
}

.grid .corner {
    padding: 8px 4px 4px 8px;
    border-right-color: #a8a8a8;
}

.grid thead th.current {
    border-right-color: #444;
    border-bottom: 4px solid var(--green);
    background: #444;
}

.grid tbody th.current {
    border-right: 4px solid var(--green);
    background: #444;
}

.grid td {
    color: #000;
}

.grid td.boxed {
    border-color: #000;
}

/* thick rules are laid over the edge of the neighbouring cell */
.grid td.thick-left {
    box-shadow: -4px 0 #000;
}

.grid td.thick-top {
    box-shadow: 0 -4px #000;
}

.grid td.thick-left.thick-top {
    box-shadow: -4px 0 #000, 0 -4px #000, -4px -4px #000;
}

.grid td.thick-bottom {
    border-bottom: 4px solid #000;
}

.grid td.num,
.grid td.right {
    text-align: right;
}

.grid td.num {
    font-size: 24px;
}

.grid td.filled {
    background: #9daabf;
}

.grid td.linked {
    text-decoration: underline;
    text-decoration-thickness: 2px;
    text-underline-offset: 4px;
}

.grid td.selected {
    position: relative;
}

.grid td.selected::after {
    content: "";
    position: absolute;
    inset: -4px;
    border: 4px solid var(--green);
}

.money {
    display: flex;
    justify-content: space-between;
    padding: 0 8px;
}

/* sheet tabs and status bar */
.sheet-tabs {
    display: flex;
    align-items: flex-start;
    height: 52px;
    padding-left: 20px;
    border-top: 2px solid #4f4f4f;
    background: #262626;
}

.arrow {
    width: 32px;
    height: 50px;
    margin-right: 14px;
}

.sheet-tab {
    width: 158px;
    height: 46px;
    margin: -2px 0 0 8px;
    border: 2px solid #4f4f4f;
    border-top: none;
    border-radius: 0 0 6px 6px;
    background: #fff;
    color: #2a7a42;
    font-size: 23px;
    font-weight: 700;
    line-height: 50px;
    text-align: center;
}

.add-sheet {
    width: 79px;
    height: 42px;
    padding-top: 6px;
    border-right: 2px solid #4a4a4a;
}

.status {
    display: flex;
    align-items: center;
    height: 46px;
    padding-left: 48px;
    border-top: 2px solid #0c0c0c;
    background: linear-gradient(#3a3a3a, #2b2b2b);
    color: #f0f0f0;
    font-size: 24px;
    font-weight: 400;
}

.macro {
    margin: 0 33px 0 42px;
}

.access {
    margin-right: 3px;
}

.view-controls {
    display: flex;
    align-items: center;
    height: 100%;
    margin-left: auto;
    padding-right: 48px;
}

.view {
    width: 71px;
    height: 100%;
    fill: none;
    stroke: #fff;
    stroke-width: 2;
}

.view.active {
    width: 74px;
    background: #4a4a4a;
}

.zoom-btn {
    width: 44px;
}

.zoom {
    appearance: none;
    width: 200px;
    height: 8px;
    margin: 0;
    border-radius: 4px;
    background: #6b6b6b;
}

.zoom::-webkit-slider-thumb {
    appearance: none;
    width: 32px;
    height: 32px;
    border-radius: 50%;
    background: #999;
}

.zoom-value {
    width: 66px;
    margin-left: 19px;
}
```
FILE: sheet.js
```js
const cols = {
    A: 132, B: 388, C: 208, D: 210, E: 192, F: 238, G: 228,
    H: 222, I: 240, J: 282, K: 132, L: 132, M: 132, N: 132
};
const names = Object.keys(cols);
const rowCount = 34;
const tallRows = [2, 3, 4, 5, 6, 7, 8, 9, 10, 29];

const cells = {
    B3: 'Opening Stock', C3: 120, D3: 'units',
    B4: 'Closing Stock', C4: 1200, D4: 'units',
    B5: 'Hiring Costs', C5: '$500.00', D5: 'per worker',
    B6: 'Firing Costs', C6: '$1,000.00', D6: 'per worker',
    B7: 'Inhouse Production costs', C7: '$60.00', D7: 'per unit',
    B8: 'Subcontract Production costs', C8: '$81.00', D8: 'per unit',
    B9: 'Backorder Costs', C9: '$100.00', D9: 'per unit',
    B10: 'Inventory Holding costs', C10: '$15.00', D10: 'per unit /month',
    B11: 'Production capacity', C11: '30.00', D11: 'per month / employee',
    B12: 'Month', C12: 0, D12: 1, E12: 2, F12: 3, G12: 4, H12: 5, I12: 6,
    B13: 'Forecast Demand', D13: 3780, E13: 5040, F13: 6720, G13: 5460, H13: 5040, I13: 4200,
    B14: 'Opening Stock',
    B15: 'In-house Production',
    B16: 'Subcontract Production',
    B17: 'Closing Stock',
    B18: 'Backorder', C18: 0,
    B19: 'Employees Required', C19: 150,
    B20: 'Production Change Costs',
    B21: 'Hiring',
    B22: 'Firing\u00a0',
    B23: 'Hiring Costs',
    B24: 'Firing Costs',
    B25: 'Inventory Costs',
    B26: 'Backorder costs',
    B27: 'In-house Production Costs',
    B28: 'Subcontract Production',
    B30: 'Total Costs'
};

const rightAligned = ['C11', 'B21', 'B22', 'B23', 'B24'];

function cellClasses(col, row) {
    const id = col + row;
    const value = cells[id];
    const list = [];
    const inTable = col >= 'B' && col <= 'J' && row >= 3;

    if (inTable) list.push('boxed');
    if (row >= 3 && 'BJK'.includes(col)) list.push('thick-left');
    if (row === 3 && inTable) list.push('thick-top');
    if (col === 'C' && row >= 3 && row <= 10) list.push('thick-bottom');
    if (id === 'D3' || id === 'J29') list.push('thick-bottom');
    if (typeof value === 'number') list.push('num');
    if (rightAligned.includes(id)) list.push('right');
    if (row === 13 && col >= 'D' && col <= 'I') list.push('filled');
    if (value === 'per worker') list.push('linked');
    if (id === 'N16') list.push('selected');
    return list.join(' ');
}

function cellContent(id) {
    const value = cells[id];
    if (value === undefined) return '';
    if (String(value).startsWith('$')) {
        return `<div class="money"><span>$</span><span>${value.slice(1)}</span></div>`;
    }
    return value;
}

document.getElementById('cols').innerHTML =
    '<col style="width: 56px">' + names.map(n => `<col style="width: ${cols[n]}px">`).join('');

document.getElementById('headRow').innerHTML =
    '<th class="corner"><svg width="42" height="42" viewBox="0 0 42 42"><path d="M42 0v42H0z" fill="#444"/></svg></th>' +
    names.map(n => `<th class="${n === 'N' ? 'current' : ''}">${n}</th>`).join('');

let html = '';
for (let r = 1; r <= rowCount; r++) {
    html += `<tr class="${tallRows.includes(r) ? 'tall' : ''}"><th class="${r === 16 ? 'current' : ''}">${r}</th>`;
    for (const n of names) {
        // D11 runs over into E11
        if (n + r === 'E11') continue;
        const span = n + r === 'D11' ? ' colspan="2"' : '';
        html += `<td class="${cellClasses(n, r)}"${span}>${cellContent(n + r)}</td>`;
    }
    html += '</tr>';
}
document.getElementById('rows').innerHTML = html;
```
